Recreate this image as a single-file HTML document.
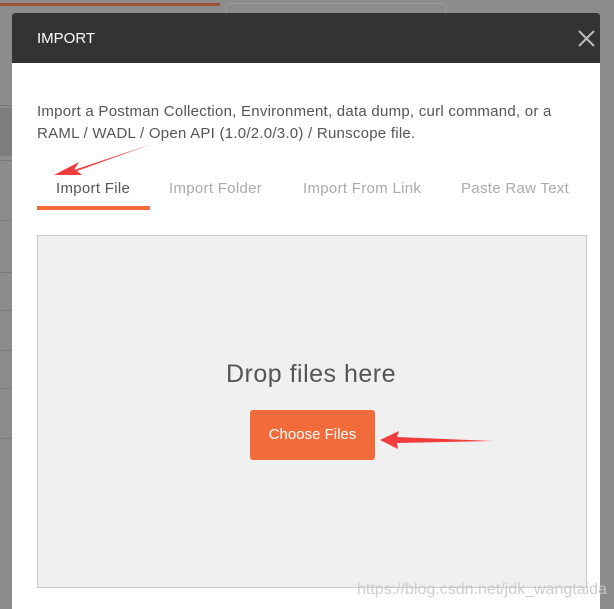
<!DOCTYPE html>
<html><head><style>
body{margin:0;width:614px;height:609px;overflow:hidden;background:#8c8c8c;font-family:"Liberation Sans",sans-serif;position:relative}
.a{position:absolute;white-space:nowrap}
</style></head><body>
<div class="a" style="left:0;top:3px;width:220px;height:3px;background:#a0533a"></div>
<div class="a" style="left:226px;top:3px;width:218px;height:30px;border:1px solid #999;border-radius:3px"></div>
<div class="a" style="left:0;top:108px;width:12px;height:48px;background:#7e7e7e"></div>
<div class="a" style="left:0;top:105px;width:12px;height:1px;background:#777"></div>
<div class="a" style="left:0;top:160px;width:12px;height:1px;background:#7a7a7a"></div>
<div class="a" style="left:0;top:220px;width:12px;height:1px;background:#7a7a7a"></div>
<div class="a" style="left:0;top:272px;width:12px;height:1px;background:#7a7a7a"></div>
<div class="a" style="left:0;top:310px;width:12px;height:1px;background:#7a7a7a"></div>
<div class="a" style="left:0;top:350px;width:12px;height:1px;background:#7a7a7a"></div>
<div class="a" style="left:0;top:388px;width:12px;height:1px;background:#7a7a7a"></div>
<div class="a" style="left:0;top:438px;width:12px;height:1px;background:#7a7a7a"></div>
<div class="a" style="left:12px;top:13px;width:588px;height:596px;background:#fff;border-radius:3px 3px 0 0;overflow:hidden">
 <div class="a" style="left:0;top:0;width:588px;height:50px;background:#333"></div>
 <div class="a" style="left:25px;top:17px;color:#fff;font-size:15px">IMPORT</div>
 <svg class="a" style="left:566px;top:17px" width="17" height="17"><path d="M1 1L16 16M16 1L1 16" stroke="#bbb" stroke-width="2"/></svg>
 <div class="a" style="left:25px;top:88px;color:#555;font-size:15px;letter-spacing:0.25px;line-height:22px">Import a Postman Collection, Environment, data dump, curl command, or a<br>RAML / WADL / Open API (1.0/2.0/3.0) / Runscope file.</div>
 <div class="a" style="left:44px;top:167px;color:#555;font-size:15px;letter-spacing:0.3px">Import File</div>
 <div class="a" style="left:157px;top:167px;color:#aaa;font-size:15px;letter-spacing:0.3px">Import Folder</div>
 <div class="a" style="left:291px;top:167px;color:#aaa;font-size:15px;letter-spacing:0.3px">Import From Link</div>
 <div class="a" style="left:449px;top:167px;color:#aaa;font-size:15px;letter-spacing:0.3px">Paste Raw Text</div>
 <div class="a" style="left:25px;top:193px;width:113px;height:4px;background:#f26b3a"></div>
 <div class="a" style="left:25px;top:222px;width:548px;height:351px;background:#f0f0f0;border:1px solid #ccc"></div>
 <div class="a" style="left:25px;top:347px;width:548px;text-align:center;color:#555;font-size:25px;letter-spacing:0.5px">Drop files here</div>
 <div class="a" style="left:238px;top:397px;width:125px;height:50px;background:#f26b3a;border-radius:3px;color:#fff;font-size:15px;line-height:50px;text-align:center">Choose Files</div>
</div>
<svg class="a" style="left:0;top:0" width="614" height="609">
 <path d="M152 144L74 170L79 162L54 175L82 175L77 171Z" fill="#f03c3c"/>
 <path d="M493 441L397 437L399 431L380 440L398 449L397 443Z" fill="#f03c3c"/>
</svg>
<div class="a" style="left:357px;top:581px;color:rgba(200,200,200,.9);font-size:16px">https://blog.csdn.net/jdk_wangtaida</div>
</body></html>
